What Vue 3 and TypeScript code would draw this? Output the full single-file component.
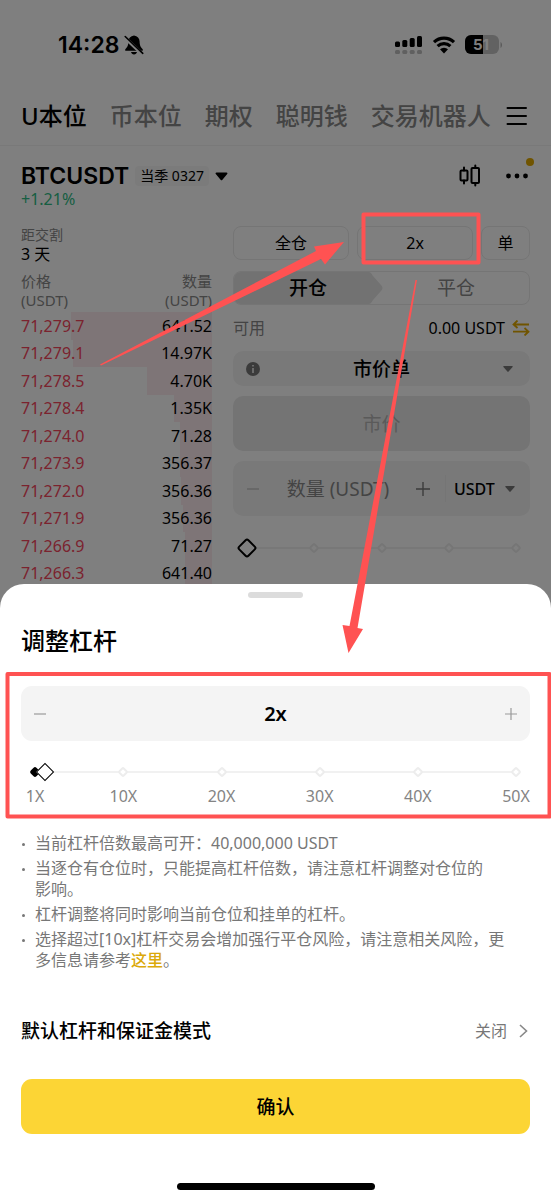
<script setup lang="ts">
import { computed, ref } from 'vue'

interface Level {
  price: string
  amount: string
  depth: number
}

const tabs: string[] = ['U本位', '币本位', '期权', '聪明钱', '交易机器人']
const activeTab = ref('U本位')

const asks: Level[] = [
  { price: '71,279.7', amount: '641.52', depth: 74 },
  { price: '71,279.1', amount: '14.97K', depth: 73 },
  { price: '71,278.5', amount: '4.70K', depth: 34 },
  { price: '71,278.4', amount: '1.35K', depth: 20 },
  { price: '71,274.0', amount: '71.28', depth: 17 },
  { price: '71,273.9', amount: '356.37', depth: 17 },
  { price: '71,272.0', amount: '356.36', depth: 16 },
  { price: '71,271.9', amount: '356.36', depth: 15 },
  { price: '71,266.9', amount: '71.27', depth: 14 },
  { price: '71,266.3', amount: '641.40', depth: 14 },
]

const share = ref(0)
const shareStops: number[] = [0, 25, 50, 75, 100]

const minLeverage = 1
const maxLeverage = 50
const leverage = ref(2)
const leverageStops: number[] = [1, 10, 20, 30, 40, 50]

function place(value: number): string {
  return ((value - minLeverage) / (maxLeverage - minLeverage)) * 100 + '%'
}

const thumbLeft = computed(() => place(leverage.value))

function step(delta: number): void {
  leverage.value = Math.min(maxLeverage, Math.max(minLeverage, leverage.value + delta))
}
</script>

<template>
  <div class="screen">
    <div class="page">
      <header class="status">
        <span class="time">14:28</span>
        <svg class="bell" width="20" height="20" viewBox="0 0 20 20" aria-hidden="true">
          <path d="M10 .5C6.500 1 4.500 3.300 4.400 6.500c-.1 4-.9 5.300-2.900 7.400-.8.900-.4 1.900.7 1.900h15.600c1.100 0 1.500-1 .7-1.900-2-2.100-2.800-3.400-2.900-7.400C15.500 3.300 13.500 1 10 .5z" fill="#000" />
          <path d="M7 17h6c-.4 1.600-1.400 2.500-3 2.500S7.400 18.600 7 17z" fill="#000" />
          <path d="M.5 2.300l18 17" stroke="#fff" stroke-width="3.400" />
          <path d="M1.200 1.500l17.600 16.800" stroke="#000" stroke-width="1.600" stroke-linecap="round" />
        </svg>
        <div class="signals">
          <svg width="28" height="20" viewBox="0 0 28 20" aria-hidden="true">
            <g fill="#000">
              <rect x="0" y="6.500" width="5" height="5.500" rx="1.500" />
              <rect x="7.300" y="5" width="5" height="7" rx="1.500" />
              <rect x="14.700" y="3" width="5" height="9" rx="1.500" />
              <rect x="22" y="1" width="5" height="11" rx="1.500" />
            </g>
            <g fill="#c0c0c0">
              <rect x="0" y="15" width="5" height="4" rx="1.500" />
              <rect x="7.300" y="15" width="5" height="4" rx="1.500" />
              <rect x="14.700" y="15" width="5" height="4" rx="1.500" />
              <rect x="22" y="15" width="5" height="4" rx="1.500" />
            </g>
          </svg>
          <svg width="24" height="20" viewBox="0 0 24 20" aria-hidden="true">
            <path d="M2 7.200a14.500 14.500 0 0 1 20 0M5.600 11.200a9.300 9.300 0 0 1 12.800 0" fill="none" stroke="#000" stroke-width="3.200" />
            <path d="M8 14.300a5.800 5.800 0 0 1 8 0L12 18.400z" fill="#000" />
          </svg>
          <svg width="38" height="20" viewBox="0 0 38 20" aria-hidden="true">
            <rect x="0" y="0" width="34" height="19" rx="6" fill="#c4c4c4" />
            <path d="M6 0h12v19H6a6 6 0 0 1-6-6V6a6 6 0 0 1 6-6z" fill="#000" />
            <path d="M35.500 7v6c2-.8 2-5.200 0-6z" fill="#b8b8b8" />
            <text x="8" y="15" class="level" fill="#fff">51</text>
          </svg>
        </div>
      </header>

      <nav class="tabs">
        <button v-for="tab in tabs" :key="tab" type="button" class="tab" :class="{ active: tab === activeTab }" @click="activeTab = tab">{{ tab }}</button>
        <button type="button" class="plain menu" aria-label="菜单">
          <svg width="22" height="20" viewBox="0 0 22 20"><path d="M1.500 2h18.500M1.500 10h18.500M1.500 18h18.500" stroke="#000" stroke-width="2" stroke-linecap="round" /></svg>
        </button>
      </nav>

      <section class="pair">
        <div class="pair-row">
          <h1>BTCUSDT</h1>
          <button type="button" class="plain contract">
            <span class="tag">当季 0327</span>
            <svg width="13" height="9" viewBox="0 0 13 9" aria-hidden="true"><path d="M1.500.5h10c1 0 1.200.8.700 1.400l-5 6c-.4.500-1 .5-1.400 0l-5-6C.3 1.300.5.500 1.500.5z" fill="#000" /></svg>
          </button>
          <button type="button" class="plain candles" aria-label="K线">
            <svg width="22" height="24" viewBox="0 0 22 24" fill="none" stroke="#000" stroke-width="2" stroke-linecap="round" stroke-linejoin="round">
              <rect x="1.500" y="6.500" width="7" height="10" rx="1" /><path d="M5 3.500v3M5 16.500v3" />
              <rect x="12.500" y="4" width="7.500" height="15" rx="1" /><path d="M16.300 1.500v2.500M16.300 19v2.500" />
            </svg>
          </button>
          <button type="button" class="plain more" aria-label="更多">
            <svg width="24" height="6" viewBox="0 0 24 6"><circle cx="2.500" cy="3" r="2.400" /><circle cx="11" cy="3" r="2.400" /><circle cx="19.500" cy="3" r="2.400" /></svg>
            <i class="dot"></i>
          </button>
        </div>
        <p class="change">+1.21%</p>
      </section>

      <div class="trade">
        <section class="book">
          <p class="muted small">距交割</p>
          <p class="days">3 天</p>
          <table>
            <thead>
              <tr><th>价格<br />(USDT)</th><th>数量<br />(USDT)</th></tr>
            </thead>
            <tbody>
              <tr v-for="row in asks" :key="row.price">
                <td class="price">{{ row.price }}</td>
                <td>{{ row.amount }}</td>
                <td class="depth" :style="{ width: row.depth + '%' }" aria-hidden="true"></td>
              </tr>
            </tbody>
          </table>
        </section>

        <section class="order">
          <div class="modes">
            <button type="button">全仓</button>
            <button type="button">{{ leverage }}x</button>
            <button type="button">单</button>
          </div>
          <div class="sides">
            <button type="button" class="open">开仓</button>
            <svg class="wedge" width="15" height="32" viewBox="0 0 15 32" aria-hidden="true"><path d="M0 0c3 0 3 1 5 4l8 9c2 2 2 4 0 6l-8 9c-2 3-2 4-5 4z" fill="#e4e4e4" /></svg>
            <button type="button" class="close">平仓</button>
          </div>
          <div class="available">
            <span class="muted">可用</span>
            <span class="balance">0.00 USDT</span>
            <button type="button" class="plain" aria-label="划转">
              <svg width="18" height="16" viewBox="0 0 18 16" fill="none" stroke="#e0a800" stroke-width="1.800"><path d="M5.500 0.500L1.500 4.500l4 3.500M2 4.500h15M12.500 8l4 3.700-4 3.800M1 11.700h15" /></svg>
            </button>
          </div>
          <div class="field type">
            <svg class="info" width="14" height="14" viewBox="0 0 14 14" aria-hidden="true"><circle cx="7" cy="7" r="7" fill="#777" /><path d="M7 3v1.500M7 6v5" stroke="#eee" stroke-width="1.600" /></svg>
            <select aria-label="订单类型"><option>市价单</option></select>
            <svg class="caret" width="10" height="6" viewBox="0 0 10 6" aria-hidden="true"><path d="M1 0h8c.8 0 1 .6.600 1l-4 4.600c-.4.400-.8.400-1.200 0L.4 1C0 .6.200 0 1 0z" fill="#777" /></svg>
          </div>
          <div class="field market"><input type="text" placeholder="市价" aria-label="价格" disabled /></div>
          <div class="field amount">
            <button type="button" class="plain" aria-label="减少数量"><svg width="14" height="14" viewBox="0 0 14 14"><path d="M1 7h12" stroke="#bbb" stroke-width="1.200" /></svg></button>
            <input type="text" placeholder="数量 (USDT)" aria-label="数量 (USDT)" />
            <button type="button" class="plain" aria-label="增加数量"><svg width="14" height="14" viewBox="0 0 14 14"><path d="M0 7h14M7 0v14" stroke="#777" stroke-width="1.400" /></svg></button>
            <div class="unit">
              <select aria-label="单位"><option>USDT</option></select>
              <svg width="10" height="6" viewBox="0 0 10 6" aria-hidden="true"><path d="M1 0h8c.8 0 1 .6.600 1l-4 4.600c-.4.400-.8.400-1.200 0L.4 1C0 .6.200 0 1 0z" fill="#777" /></svg>
            </div>
          </div>
          <div class="slider share">
            <span v-for="stop in shareStops" :key="stop" class="stop" :style="{ left: stop + '%' }"></span>
            <span class="thumb" :style="{ left: share + '%' }"></span>
            <input v-model.number="share" type="range" min="0" max="100" aria-label="仓位比例" />
          </div>
        </section>
      </div>
    </div>

    <main class="sheet">
      <div class="grip"></div>
      <h2>调整杠杆</h2>
      <div class="stepper">
        <button type="button" class="plain" aria-label="降低杠杆" @click="step(-1)"><svg width="12" height="12" viewBox="0 0 12 12"><path d="M0 6h12" stroke="#999" stroke-width="1.200" /></svg></button>
        <output>{{ leverage }}x</output>
        <button type="button" class="plain" aria-label="提高杠杆" @click="step(1)"><svg width="12" height="12" viewBox="0 0 12 12"><path d="M0 6h12M6 0v12" stroke="#999" stroke-width="1.200" /></svg></button>
      </div>
      <div class="scale">
        <div class="slider">
          <span v-for="stop in leverageStops" :key="stop" class="stop" :class="{ passed: stop < leverage }" :style="{ left: place(stop) }"></span>
          <span class="thumb" :style="{ left: thumbLeft }"></span>
          <input v-model.number="leverage" type="range" :min="minLeverage" :max="maxLeverage" aria-label="杠杆倍数" />
        </div>
        <div class="marks">
          <span v-for="stop in leverageStops" :key="stop" :style="{ left: place(stop) }">{{ stop }}X</span>
        </div>
      </div>
      <ul class="tips">
        <li>当前杠杆倍数最高可开：40,000,000 USDT</li>
        <li>当逐仓有仓位时，只能提高杠杆倍数，请注意杠杆调整对仓位的<br />影响。</li>
        <li>杠杆调整将同时影响当前仓位和挂单的杠杆。</li>
        <li>选择超过[10x]杠杆交易会增加强行平仓风险，请注意相关风险，更<br />多信息请参考<a href="#risk">这里</a>。</li>
      </ul>
      <button type="button" class="plain setting">
        <span class="setting-name">默认杠杆和保证金模式</span>
        <span class="setting-value">关闭</span>
        <svg width="9" height="14" viewBox="0 0 9 14" aria-hidden="true"><path d="M1 1l6.500 6L1 13" fill="none" stroke="#888" stroke-width="1.600" /></svg>
      </button>
      <button type="button" class="confirm">确认</button>
      <div class="home"></div>
    </main>

    <svg class="notes" viewBox="0 0 551 1200" aria-hidden="true">
      <g fill="none" stroke="#ff5252" stroke-width="4" stroke-linejoin="round">
        <rect x="363.500" y="214.500" width="115" height="48" />
        <rect x="7.500" y="674" width="542" height="142.500" />
      </g>
      <g fill="#ff5252">
        <path d="M100 364.500L316 251 314 246.500 344 242 325 264.500 321 259 101 365.500z" />
        <path d="M415.500 280L349.500 626 342.500 625 348.500 653 363 629 357.500 628 417 280z" />
      </g>
    </svg>
  </div>
</template>

<style>
body {
  margin: 0;
}
</style>

<style scoped>
.screen {
  position: relative;
  overflow: hidden;
  background: #fff;
  color: #000;
  font: 400 16px/20px "Noto Sans", "Noto Sans CJK SC", sans-serif;
}
h1, h2, p, ul {
  margin: 0;
  padding: 0;
}
button, input, select {
  margin: 0;
  padding: 0;
  border: 0;
  background: none;
  color: inherit;
  font: inherit;
  box-sizing: border-box;
}
select {
  appearance: none;
}
svg {
  display: block;
  flex: none;
}
.plain {
  display: flex;
  align-items: center;
}
.muted {
  color: #888;
}

.page {
  position: relative;
  isolation: isolate;
  padding-bottom: 21px;
}
.page::after {
  content: "";
  position: absolute;
  z-index: 2;
  inset: 0;
  background: rgba(0, 0, 0, 0.5);
}
.status {
  display: flex;
  align-items: center;
  height: 86px;
  padding: 2px 48px 0 58px;
}
.time {
  font: 600 23px/24px Inter, sans-serif;
}
.bell {
  margin-left: 5px;
}
.signals {
  display: flex;
  gap: 9px;
  margin-left: auto;
}
.level {
  font: 700 15px Inter, sans-serif;
}
.tabs {
  display: flex;
  align-items: center;
  gap: 23px;
  height: 55px;
  padding: 0 23px 2px 21px;
  border-bottom: 1px solid #f2f2f2;
}
.tab {
  color: #888;
  font-size: 24px;
  font-weight: 500;
  line-height: 32px;
  white-space: nowrap;
}
.tab.active {
  color: #000;
}
.menu {
  margin-left: auto;
}
.tab + .menu {
  margin-left: -8px;
}
.pair {
  padding: 17px 21px 0;
}
.pair-row {
  display: flex;
  align-items: center;
  height: 26px;
}
h1 {
  font: 600 23px/24px Inter, sans-serif;
}
.contract {
  gap: 6px;
  margin-left: 6px;
}
.tag {
  padding: 0 5px;
  border-radius: 4px;
  background: #f6f6f6;
  font-size: 14px;
}
.candles {
  margin-left: auto;
}
.more {
  position: relative;
  margin-left: 25px;
}
.dot {
  position: absolute;
  top: -15px;
  right: -4px;
  width: 8px;
  height: 8px;
  border-radius: 50%;
  background: #e0a800;
}
.change {
  color: #2ebd85;
}

.trade {
  display: flex;
  gap: 21px;
  padding: 17px 21px 0;
}
.book {
  flex: 191;
  min-width: 0;
}
.small {
  font-size: 14px;
  line-height: 18px;
}
.order {
  flex: 297;
  min-width: 0;
}
table, thead, tbody {
  display: block;
}
table {
  margin-top: 8px;
}
tr {
  position: relative;
  display: flex;
  align-items: center;
  justify-content: space-between;
}
tbody {
  display: grid;
  grid-template-rows: repeat(10, 1fr);
  height: 275px;
}
th {
  padding: 0 0 2px;
  color: #888;
  font-size: 15px;
  font-weight: 400;
  line-height: 19px;
  text-align: left;
}
th + th {
  text-align: right;
}
td {
  position: relative;
  z-index: 1;
  padding: 0;
}
.price {
  color: #f6465d;
}
.depth {
  position: absolute;
  z-index: 0;
  top: 0;
  right: 0;
  bottom: 0;
  background: #fdebee;
}

.modes {
  display: flex;
  gap: 8px;
}
.modes button {
  flex: 117;
  height: 34px;
  border: 1px solid #eaeaea;
  border-radius: 8px;
}
.modes button:last-child {
  flex: 48;
}
.sides {
  display: flex;
  height: 32px;
  margin-top: 11px;
  overflow: hidden;
  border: 1px solid #eaeaea;
  border-radius: 8px;
  font-size: 19px;
}
.open {
  flex: 120;
  padding-left: 14px;
  background: #e4e4e4;
  font-weight: 500;
}
.close {
  flex: 146;
  color: #888;
}
.available {
  display: flex;
  align-items: center;
  height: 46px;
}
.balance {
  margin: 0 7px 0 auto;
}
.field {
  display: flex;
  align-items: center;
  height: 55px;
  margin-bottom: 10px;
  border-radius: 10px;
  background: #f3f3f3;
}
.field input {
  flex: 1;
  width: 0;
  min-width: 0;
  text-align: center;
}
.field input::placeholder {
  color: #888;
  opacity: 1;
}
.type {
  height: 35px;
  padding: 0 17px 0 13px;
}
.type select {
  flex: 1;
  height: 34px;
  font-size: 19px;
  font-weight: 500;
  text-align: center;
  text-align-last: center;
}
.market {
  background: #e9e9e9;
  font-size: 19px;
}
.market input::placeholder {
  color: #b4b4b4;
}
.amount {
  padding: 0 15px 0 13px;
  font-size: 19px;
}
.unit {
  display: flex;
  align-items: center;
  gap: 10px;
  height: 27px;
  margin-left: 15px;
  padding-left: 8px;
  border-left: 1px solid #eaeaea;
  font-size: 16px;
  font-weight: 500;
}

.slider {
  position: relative;
  height: 30px;
}
.slider::before {
  content: "";
  position: absolute;
  top: 14px;
  left: 0;
  right: 0;
  height: 2px;
  background: #f1f1f1;
}
.slider input {
  position: absolute;
  inset: 0;
  width: 100%;
  opacity: 0;
}
.stop, .thumb {
  position: absolute;
  top: 50%;
  box-sizing: border-box;
  border: 2px solid #ededed;
  background: #fff;
  transform: translate(-50%, -50%) rotate(45deg);
}
.stop {
  width: 8px;
  height: 8px;
  border-radius: 2px;
}
.stop.passed {
  border-color: #000;
  background: #000;
}
.thumb {
  width: 13px;
  height: 13px;
  border: 1px solid #000;
}
.share {
  margin: 17px 14px 0;
}
.share .thumb {
  width: 15px;
  height: 15px;
  border-width: 2px;
  border-radius: 3px;
}

.sheet {
  position: relative;
  margin-top: -24px;
  padding: 8px 21px 10px;
  border-radius: 24px 24px 0 0;
  background: #fff;
}
.grip {
  width: 55px;
  height: 6px;
  margin: 0 auto;
  border-radius: 3px;
  background: #dcdcdc;
}
h2 {
  margin-top: 27px;
  font-size: 24px;
  font-weight: 500;
  line-height: 32px;
}
.stepper {
  display: flex;
  align-items: center;
  justify-content: space-between;
  height: 55px;
  margin-top: 29px;
  padding: 0 13px;
  border-radius: 11px;
  background: #f4f4f4;
}
output {
  font-size: 20px;
  font-weight: 600;
}
.scale {
  margin: 16px 14px 0;
}
.marks {
  position: relative;
  height: 20px;
  color: #848484;
  line-height: 18px;
}
.marks span {
  position: absolute;
  transform: translateX(-50%);
}
.tips {
  display: grid;
  gap: 4px;
  margin-top: 26px;
  color: #777;
  line-height: 21px;
  list-style: none;
}
.tips li {
  position: relative;
  padding-left: 14px;
}
.tips li::before {
  content: "";
  position: absolute;
  top: 10px;
  left: 1px;
  width: 3px;
  height: 3px;
  border-radius: 50%;
  background: #777;
}
.tips a {
  color: #dba90a;
  font-weight: 500;
  text-decoration: none;
}
.setting {
  width: 100%;
  height: 40px;
  margin-top: 40px;
  padding-right: 2px;
}
.setting-name {
  margin-right: auto;
  font-size: 19px;
  font-weight: 500;
}
.setting-value {
  margin-right: 12px;
  color: #777;
}
.confirm {
  display: block;
  width: 100%;
  height: 55px;
  margin-top: 28px;
  border-radius: 11px;
  background: #fcd535;
  font-size: 19px;
  font-weight: 500;
}
.home {
  width: 198px;
  height: 7px;
  margin: 49px auto 0;
  border-radius: 4px;
  background: #000;
}
.notes {
  position: absolute;
  top: 0;
  left: 0;
  width: 100%;
  pointer-events: none;
}
</style>
